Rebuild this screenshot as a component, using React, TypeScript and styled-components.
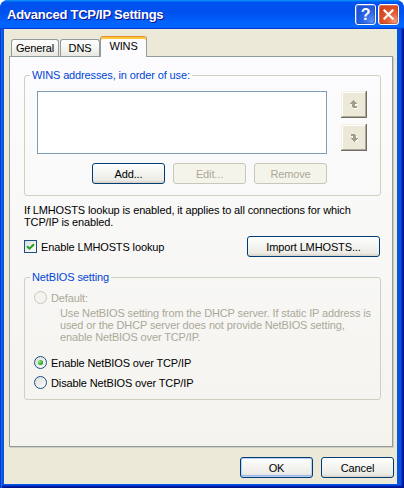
import React from 'react'
import styled, { createGlobalStyle } from 'styled-components'

const GlobalStyle = createGlobalStyle`
  html, body {
    margin: 0;
    padding: 0;
    background: #fff;
  }
  body {
    font-family: 'Liberation Sans', Arial, sans-serif;
    font-size: 11px;
    letter-spacing: -0.13px;
    color: #000;
  }
`

const Window = styled.div`
  width: 404px;
  height: 488px;
  display: flex;
  flex-direction: column;
  border-radius: 8px 8px 0 0;
  overflow: hidden;
  background: #0855dd;
`

const TitleBar = styled.div`
  height: 29px;
  flex-shrink: 0;
  display: flex;
  align-items: center;
  padding: 0 5px 0 7px;
  background: linear-gradient(
    180deg,
    #0997ff,
    #0053ee 8%,
    #0050ee 40%,
    #0066ff 88%,
    #0066ff 93%,
    #005bff 95%,
    #003dd7 96%,
    #003dd7
  );
`

const Title = styled.div`
  flex: 1;
  color: #fff;
  font: bold 13px 'Liberation Sans', Arial, sans-serif;
  letter-spacing: -0.25px;
  text-shadow: 1px 1px #0f1089;
`

const TitleButtons = styled.div`
  display: flex;
  gap: 2px;
`

const TitleButton = styled.div<{ $kind: 'help' | 'close' }>`
  box-sizing: border-box;
  width: 21px;
  height: 21px;
  border: 1px solid #fff;
  border-radius: 3px;
  display: flex;
  align-items: center;
  justify-content: center;
  color: #fff;
  font: bold 16px 'Liberation Sans', Arial, sans-serif;
  background: ${p =>
    p.$kind === 'help'
      ? 'radial-gradient(circle at 85% 85%, #5a8ff5 0%, #2e6ae6 35%, #1f55d8 70%, #1a4ccd 100%)'
      : 'radial-gradient(circle at 85% 85%, #f2997c 0%, #e35d35 35%, #d6481f 70%, #c9401b 100%)'};
  box-shadow: inset -1px -1px rgba(0, 0, 0, 0.15), inset 1px 1px rgba(255, 255, 255, 0.25);
`

const Frame = styled.div`
  flex: 1;
  display: flex;
  padding: 0 7px 4px 4px;
  background: #0855dd;
  box-shadow:
    inset 1px 0 #0831d9,
    inset 2px 0 #166aee,
    inset -1px -1px #00138c,
    inset -2px -2px #001ea0,
    inset -3px -3px #003bda;
`

const Body = styled.div`
  flex: 1;
  display: flex;
  flex-direction: column;
  padding-top: 7px;
  background: #ece9d8;
`

const TabStrip = styled.div`
  display: flex;
  align-items: flex-end;
  height: 20px;
  padding-left: 7px;
  position: relative;
  z-index: 1;
`

const Tab = styled.div<{ $active?: boolean; $width: number; $gap?: number }>`
  box-sizing: border-box;
  width: ${p => p.$width}px;
  height: ${p => (p.$active ? 21 : 17)}px;
  margin-bottom: ${p => (p.$active ? -1 : 0)}px;
  margin-right: ${p => p.$gap ?? 0}px;
  padding-bottom: ${p => (p.$active ? 3 : 0)}px;
  display: flex;
  align-items: center;
  justify-content: center;
  border: 1px solid #919b9c;
  border-bottom: none;
  border-radius: 3px 3px 0 0;
  background: ${p => (p.$active ? '#fcfcfe' : 'linear-gradient(180deg, #fff, #f3f3ef 60%, #e8e7e0)')};
  ${p =>
    p.$active &&
    `
    border-top-color: #e68b2c;
    box-shadow: inset 0 2px #ffc73c;
  `}
`

const Panel = styled.div`
  box-sizing: border-box;
  width: 384px;
  height: 391px;
  margin-left: 5px;
  padding: 12px 0 0 14px;
  border: 1px solid #919b9c;
  background: linear-gradient(180deg, #fcfcfe, #f4f3ee);
  box-shadow: 1px 1px #d0cebf;
`

const Group = styled.fieldset<{ $mt: number }>`
  box-sizing: border-box;
  width: 357px;
  min-width: 0;
  margin: ${p => p.$mt}px 0 0 0;
  padding: 0;
  border: 1px solid #d0d0bf;
  border-radius: 3px;
`

const Legend = styled.legend`
  margin-left: 5px;
  padding: 0 2px;
  line-height: 13px;
  color: #0046d5;
`

const GroupBody = styled.div<{ $pad: string }>`
  padding: ${p => p.$pad};
`

const AddressRow = styled.div`
  display: flex;
  gap: 14px;
`

const ListBox = styled.div`
  box-sizing: border-box;
  width: 290px;
  height: 63px;
  border: 1px solid #7f9db9;
  background: #fff;
`

const MoveColumn = styled.div`
  display: flex;
  flex-direction: column;
  gap: 6px;
`

const MoveButton = styled.div`
  width: 26px;
  height: 27px;
  display: flex;
  align-items: center;
  justify-content: center;
  background: #ece9d8;
  box-shadow:
    inset -1px -1px #716f64,
    inset 1px 1px #f1efe2,
    inset -2px -2px #aca899,
    inset 2px 2px #fff;
`

const ButtonRow = styled.div`
  display: flex;
  justify-content: flex-end;
  gap: 8px;
  width: 290px;
  margin-top: 9px;
`

const Button = styled.button<{ $width?: number; $default?: boolean }>`
  box-sizing: border-box;
  width: ${p => p.$width ?? 73}px;
  height: 21px;
  padding: 0;
  font: 11px 'Liberation Sans', Arial, sans-serif;
  letter-spacing: -0.13px;
  color: #000;
  border: 1px solid #003c74;
  border-radius: 3px;
  background: linear-gradient(180deg, #fff 0%, #f6f6f3 35%, #ecebe6 85%, #d6d0c5 100%);
  box-shadow: ${p => (p.$default ? 'inset 0 0 0 1px #b7cff5, inset 0 -1px 0 1px #98b8ea' : 'none')};

  &:disabled {
    border-color: #c9c7ba;
    background: #f5f4ea;
    color: #aca899;
    box-shadow: none;
  }
`

const Note = styled.p`
  margin: 8px 0 0 0;
  line-height: 12px;
  white-space: nowrap;
`

const LookupRow = styled.div`
  display: flex;
  align-items: center;
  justify-content: space-between;
  width: 356px;
  margin-top: 8px;
`

const Choice = styled.label<{ $disabled?: boolean; $mt?: number }>`
  display: flex;
  align-items: center;
  gap: 4px;
  height: 13px;
  margin-top: ${p => p.$mt ?? 0}px;
  color: ${p => (p.$disabled ? '#aca899' : '#000')};
`

const CheckBox = styled.span`
  box-sizing: border-box;
  width: 13px;
  height: 13px;
  display: flex;
  align-items: center;
  justify-content: center;
  border: 1px solid #1c5180;
  background: linear-gradient(135deg, #dcdcd7, #fff);
`

const Radio = styled.span<{ $disabled?: boolean }>`
  box-sizing: border-box;
  width: 13px;
  height: 13px;
  border-radius: 50%;
  display: flex;
  align-items: center;
  justify-content: center;
  border: 1px solid ${p => (p.$disabled ? '#cac8bb' : '#1c5180')};
  background: ${p => (p.$disabled ? '#f4f3ee' : 'linear-gradient(135deg, #dcdcd7, #fff)')};
`

const RadioDot = styled.span`
  width: 5px;
  height: 5px;
  border-radius: 50%;
  background: radial-gradient(circle at 35% 35%, #a0f09c, #2fb22a 50%, #098a09);
`

const Description = styled.div`
  margin: 3px 0 0 26px;
  line-height: 12px;
  color: #aca899;
  white-space: nowrap;
`

const Footer = styled.div`
  display: flex;
  justify-content: flex-end;
  gap: 8px;
  margin-top: 10px;
  padding-right: 3px;
`

// pixel cells of the up arrow (the down arrow is the same turned round)
const arrowCells: [number, number, number, number][] = [
  [3, 0, 1, 1],
  [2, 1, 3, 1],
  [1, 2, 5, 1],
  [0, 3, 7, 1],
  [2, 4, 3, 2],
  [2, 6, 5, 1],
  [3, 7, 4, 1],
]

const MoveArrow = ({ down }: { down?: boolean }) => (
  <svg
    width="8"
    height="9"
    viewBox="0 0 8 9"
    shapeRendering="crispEdges"
    style={down ? { transform: 'rotate(180deg)' } : undefined}
  >
    <g fill="#fff" transform={down ? 'translate(-1 -1)' : 'translate(1 1)'}>
      {arrowCells.map(([x, y, w, h], i) => (
        <rect key={i} x={x} y={y} width={w} height={h} />
      ))}
    </g>
    <g fill="#a29e89">
      {arrowCells.map(([x, y, w, h], i) => (
        <rect key={i} x={x} y={y} width={w} height={h} />
      ))}
    </g>
  </svg>
)

export default function App() {
  return (
    <>
      <GlobalStyle />
      <Window>
        <TitleBar>
          <Title>Advanced TCP/IP Settings</Title>
          <TitleButtons>
            <TitleButton $kind="help">?</TitleButton>
            <TitleButton $kind="close">
              <svg width="11" height="11" viewBox="0 0 11 11">
                <path d="M1.5 1.5 L9.5 9.5 M9.5 1.5 L1.5 9.5" stroke="#fff" strokeWidth="2.2" strokeLinecap="square" />
              </svg>
            </TitleButton>
          </TitleButtons>
        </TitleBar>

        <Frame>
          <Body>
            <TabStrip>
              <Tab $width={48} $gap={1}>General</Tab>
              <Tab $width={40}>DNS</Tab>
              <Tab $width={47} $active>WINS</Tab>
            </TabStrip>

            <Panel>
              <Group $mt={0}>
                <Legend>WINS addresses, in order of use:</Legend>
                <GroupBody $pad="9px 0 11px 12px">
                  <AddressRow>
                    <ListBox />
                    <MoveColumn>
                      <MoveButton>
                        <MoveArrow />
                      </MoveButton>
                      <MoveButton>
                        <MoveArrow down />
                      </MoveButton>
                    </MoveColumn>
                  </AddressRow>
                  <ButtonRow>
                    <Button>Add...</Button>
                    <Button disabled>Edit...</Button>
                    <Button disabled>Remove</Button>
                  </ButtonRow>
                </GroupBody>
              </Group>

              <Note>
                If LMHOSTS lookup is enabled, it applies to all connections for which
                <br />
                TCP/IP is enabled.
              </Note>

              <LookupRow>
                <Choice>
                  <CheckBox>
                    <svg width="9" height="9" viewBox="0 0 9 9">
                      <path d="M1 4.2 L3.5 6.7 L8 2.2" fill="none" stroke="#21a121" strokeWidth="2" />
                    </svg>
                  </CheckBox>
                  Enable LMHOSTS lookup
                </Choice>
                <Button $width={133}>Import LMHOSTS...</Button>
              </LookupRow>

              <Group $mt={14}>
                <Legend>NetBIOS setting</Legend>
                <GroupBody $pad="7px 0 10px 9px">
                  <Choice $disabled>
                    <Radio $disabled />
                    Default:
                  </Choice>
                  <Description>
                    Use NetBIOS setting from the DHCP server. If static IP address is
                    <br />
                    used or the DHCP server does not provide NetBIOS setting,
                    <br />
                    enable NetBIOS over TCP/IP.
                  </Description>
                  <Choice $mt={13}>
                    <Radio>
                      <RadioDot />
                    </Radio>
                    Enable NetBIOS over TCP/IP
                  </Choice>
                  <Choice $mt={7}>
                    <Radio />
                    Disable NetBIOS over TCP/IP
                  </Choice>
                </GroupBody>
              </Group>
            </Panel>

            <Footer>
              <Button $default>OK</Button>
              <Button>Cancel</Button>
            </Footer>
          </Body>
        </Frame>
      </Window>
    </>
  )
}
